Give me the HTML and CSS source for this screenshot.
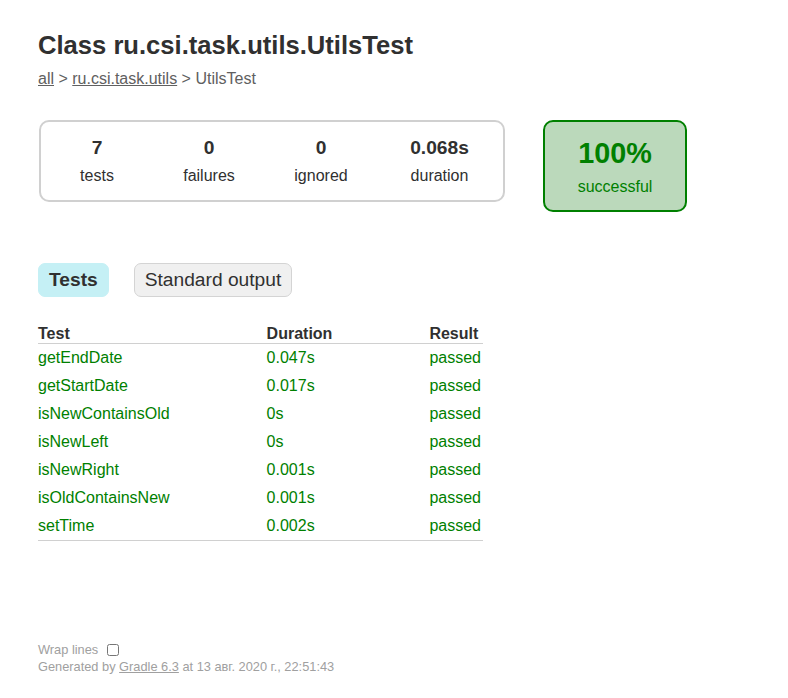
FILE: index.html
```html
<!DOCTYPE html>
<html>
<head>
<meta charset="utf-8">
<title>Test results - Class ru.csi.task.utils.UtilsTest</title>
<link rel="stylesheet" href="styles.css">
</head>
<body>
<div class="content">
  <h1 class="title">Class ru.csi.task.utils.UtilsTest</h1>
  <div class="breadcrumbs">
    <a href="#">all</a> &gt; <a href="#">ru.csi.task.utils</a> &gt; UtilsTest
  </div>

  <div class="summary">
    <div class="summary-group">
      <div class="info-box">
        <div class="counter">7</div>
        <p>tests</p>
      </div>
      <div class="info-box">
        <div class="counter">0</div>
        <p>failures</p>
      </div>
      <div class="info-box">
        <div class="counter">0</div>
        <p>ignored</p>
      </div>
      <div class="info-box duration">
        <div class="counter">0.068s</div>
        <p>duration</p>
      </div>
    </div>
    <div class="success-rate">
      <div class="percent">100%</div>
      <p>successful</p>
    </div>
  </div>

  <ul class="tab-links">
    <li class="tab-link selected"><a href="#">Tests</a></li>
    <li class="tab-link"><a href="#">Standard output</a></li>
  </ul>

  <table class="tests">
    <thead>
      <tr><th>Test</th><th>Duration</th><th>Result</th></tr>
    </thead>
    <tbody>
      <tr><td>getEndDate</td><td>0.047s</td><td>passed</td></tr>
      <tr><td>getStartDate</td><td>0.017s</td><td>passed</td></tr>
      <tr><td>isNewContainsOld</td><td>0s</td><td>passed</td></tr>
      <tr><td>isNewLeft</td><td>0s</td><td>passed</td></tr>
      <tr><td>isNewRight</td><td>0.001s</td><td>passed</td></tr>
      <tr><td>isOldContainsNew</td><td>0.001s</td><td>passed</td></tr>
      <tr><td>setTime</td><td>0.002s</td><td>passed</td></tr>
    </tbody>
  </table>

  <div class="footer">
    <label class="wrap-label">Wrap lines<input class="wrap-toggle" type="checkbox"></label>
    <p class="generated">Generated by <a href="#">Gradle 6.3</a> at 13 авг. 2020 г., 22:51:43</p>
  </div>
</div>
</body>
</html>
```

FILE: styles.css
```css
html, body {
  margin: 0;
  padding: 0;
  background: #ffffff;
}

body {
  font-family: "Liberation Sans", Arial, sans-serif;
  font-size: 16px;
  color: #303030;
}

a {
  color: #303030;
}

.content {
  padding: 31px 50px 30px 38px;
}

.title {
  margin: 0 0 10px 0;
  font-size: 25.6px;
  font-weight: bold;
  white-space: nowrap;
}

.breadcrumbs,
.breadcrumbs a {
  color: #606060;
}

.summary {
  display: flex;
  align-items: flex-start;
  margin-top: 32px;
  margin-left: 1px;
}

.summary-group {
  display: flex;
  border: 2px solid #d0d0d0;
  border-radius: 10px;
}

.info-box {
  width: 112px;
  padding: 15px 0;
  text-align: center;
}

.info-box.duration {
  width: 125px;
  padding-right: 1px;
}

.info-box p,
.success-rate p {
  margin: 0;
}

.counter {
  font-size: 19.2px;
  font-weight: bold;
  margin-bottom: 8px;
}

.success-rate {
  width: 140px;
  margin-left: 38px;
  padding: 15px 0 14px 0;
  text-align: center;
  border: 2px solid #008000;
  border-radius: 10px;
  background-color: #bbd9bb;
  color: #008000;
}

.percent {
  font-size: 28.8px;
  font-weight: bold;
  margin-bottom: 8px;
}

.tab-links {
  display: flex;
  list-style: none;
  margin: 51px 0 28px 0;
  padding: 0;
}

.tab-link {
  padding: 5px 10px;
  margin-right: 25px;
  border: 1px solid #d4d4d4;
  border-radius: 7px;
  background-color: #f0f0f0;
}

.tab-link a {
  display: block;
  font-size: 19.2px;
  text-decoration: none;
  color: #303030;
}

.tab-link.selected {
  background-color: #c5f0f5;
  border-color: #c5f0f5;
}

.tab-link.selected a {
  font-weight: bold;
}

.tests {
  border-collapse: collapse;
  border-bottom: 1px solid #d0d0d0;
}

.tests th {
  text-align: left;
  white-space: nowrap;
  padding: 0 0 0 97px;
  border-bottom: 1px solid #d0d0d0;
}

.tests td {
  white-space: nowrap;
  padding: 5px 0 5px 97px;
  color: #008000;
}

.tests th:first-child,
.tests td:first-child {
  padding-left: 0;
}

.tests th:last-child,
.tests td:last-child {
  padding-right: 2px;
}

.footer {
  margin-top: 101px;
  font-size: 12.8px;
  color: #a0a0a0;
  white-space: nowrap;
}

.footer a {
  color: #a0a0a0;
}

.wrap-label {
  display: inline-flex;
  align-items: center;
}

.wrap-toggle {
  width: 12px;
  height: 12px;
  margin: 0 0 0 9px;
}

.generated {
  margin: 2px 0 0 0;
}
```
